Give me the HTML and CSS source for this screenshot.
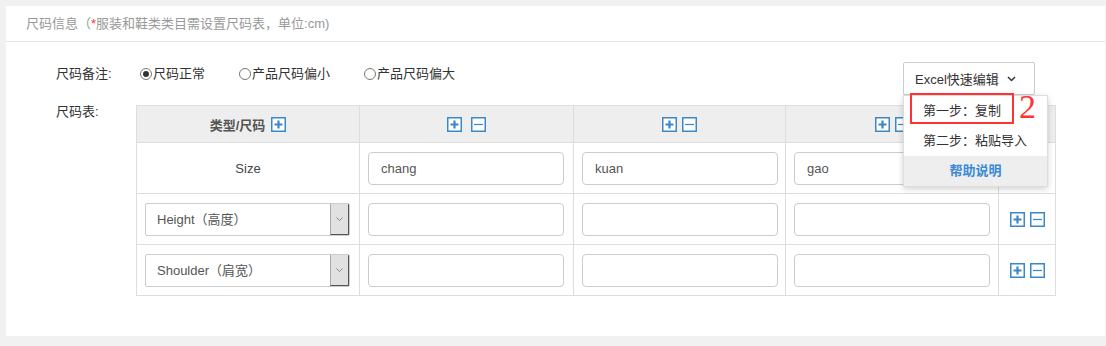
FILE: index.html
```html
<!DOCTYPE html>
<html lang="zh-CN">
<head>
  <meta charset="UTF-8">
  <title>尺码信息</title>
  <link rel="stylesheet" href="styles.css">
</head>
<body>

<div class="panel">
  <div class="panel-head">尺码信息（<span class="req">*</span>服装和鞋类类目需设置尺码表，单位:cm)</div>

  <div class="panel-body">
    <div class="note-row">
      <div class="label">尺码备注:</div>
      <div class="radios">
        <label class="radio"><span class="dot checked"></span>尺码正常</label>
        <label class="radio"><span class="dot"></span>产品尺码偏小</label>
        <label class="radio"><span class="dot"></span>产品尺码偏大</label>
      </div>

      <div class="dropdown">
        <div class="dd-btn">Excel快速编辑
          <svg class="caret" width="9" height="6" viewBox="0 0 9 6"><path d="M1 1l3.5 3.5L8 1" fill="none" stroke="#333" stroke-width="1.5"/></svg>
        </div>
        <div class="dd-menu">
          <div class="dd-item">第一步：复制</div>
          <div class="dd-item">第二步：粘贴导入</div>
          <div class="dd-item help">帮助说明</div>
          <div class="mark"></div>
          <div class="mark-num">2</div>
        </div>
      </div>
    </div>

    <div class="table-row">
      <div class="label short">尺码表:</div>
      <table class="size-table">
        <colgroup>
          <col style="width:223px"><col style="width:214px"><col style="width:212px"><col style="width:213px"><col style="width:57px">
        </colgroup>
        <tr class="head">
          <th><span class="th-text">类型/尺码</span><span class="icons"><svg class="ico" viewBox="0 0 15 15"><rect x="0.75" y="0.75" width="13.5" height="13.5"/><path class="plus" d="M3.5 7.5h8M7.5 3.5v8"/></svg></span></th>
          <th><span class="icons wide"><svg class="ico" viewBox="0 0 15 15"><rect x="0.75" y="0.75" width="13.5" height="13.5"/><path class="plus" d="M3.5 7.5h8M7.5 3.5v8"/></svg><svg class="ico" viewBox="0 0 15 15"><rect x="0.75" y="0.75" width="13.5" height="13.5"/><path class="minus" d="M3 7.5h9"/></svg></span></th>
          <th><span class="icons"><svg class="ico" viewBox="0 0 15 15"><rect x="0.75" y="0.75" width="13.5" height="13.5"/><path class="plus" d="M3.5 7.5h8M7.5 3.5v8"/></svg><svg class="ico" viewBox="0 0 15 15"><rect x="0.75" y="0.75" width="13.5" height="13.5"/><path class="minus" d="M3 7.5h9"/></svg></span></th>
          <th><span class="icons"><svg class="ico" viewBox="0 0 15 15"><rect x="0.75" y="0.75" width="13.5" height="13.5"/><path class="plus" d="M3.5 7.5h8M7.5 3.5v8"/></svg><svg class="ico" viewBox="0 0 15 15"><rect x="0.75" y="0.75" width="13.5" height="13.5"/><path class="minus" d="M3 7.5h9"/></svg></span></th>
          <th></th>
        </tr>
        <tr>
          <td class="name">Size</td>
          <td><input class="field" value="chang"></td>
          <td><input class="field" value="kuan"></td>
          <td><input class="field" value="gao"></td>
          <td></td>
        </tr>
        <tr>
          <td><div class="select"><span class="sel-text">Height（高度）</span><span class="sel-btn"><svg width="7" height="4" viewBox="0 0 7 4"><path d="M0.5 0.5l3 3 3-3" fill="none" stroke="#888" stroke-width="1"/></svg></span></div></td>
          <td><input class="field"></td>
          <td><input class="field"></td>
          <td><input class="field"></td>
          <td><span class="icons"><svg class="ico" viewBox="0 0 15 15"><rect x="0.75" y="0.75" width="13.5" height="13.5"/><path class="plus" d="M3.5 7.5h8M7.5 3.5v8"/></svg><svg class="ico" viewBox="0 0 15 15"><rect x="0.75" y="0.75" width="13.5" height="13.5"/><path class="minus" d="M3 7.5h9"/></svg></span></td>
        </tr>
        <tr>
          <td><div class="select"><span class="sel-text">Shoulder（肩宽）</span><span class="sel-btn"><svg width="7" height="4" viewBox="0 0 7 4"><path d="M0.5 0.5l3 3 3-3" fill="none" stroke="#888" stroke-width="1"/></svg></span></div></td>
          <td><input class="field"></td>
          <td><input class="field"></td>
          <td><input class="field"></td>
          <td><span class="icons"><svg class="ico" viewBox="0 0 15 15"><rect x="0.75" y="0.75" width="13.5" height="13.5"/><path class="plus" d="M3.5 7.5h8M7.5 3.5v8"/></svg><svg class="ico" viewBox="0 0 15 15"><rect x="0.75" y="0.75" width="13.5" height="13.5"/><path class="minus" d="M3 7.5h9"/></svg></span></td>
        </tr>
      </table>
    </div>
  </div>
</div>

</body>
</html>
```

FILE: styles.css
```css
body {
  margin: 0;
  background: #f1f1f1;
  font-family: "Liberation Sans", "Noto Sans CJK SC", sans-serif;
  font-size: 13px;
  color: #333;
}
.panel {
  margin: 6px 1px 0 6px;
  height: 330px;
  background: #fff;
}
.panel-head {
  height: 35px;
  line-height: 35px;
  padding-left: 20px;
  border-bottom: 1px solid #e5e5e5;
  color: #999;
}
.req {
  color: #f33;
}
.panel-body {
  padding: 20px 0 0 50px;
}
.note-row {
  display: flex;
  align-items: flex-start;
}
.label {
  width: 84px;
  line-height: 24px;
  flex: none;
}
.label.short {
  width: 80px;
  line-height: 14px;
}
.radios {
  display: flex;
  line-height: 24px;
}
.radio {
  display: flex;
  align-items: center;
  margin-right: 34px;
}
.dot {
  width: 10px;
  height: 10px;
  border: 1px solid #777;
  border-radius: 50%;
  margin-right: 1px;
  position: relative;
}
.dot.checked::after {
  content: "";
  position: absolute;
  left: 2px;
  top: 2px;
  width: 6px;
  height: 6px;
  border-radius: 50%;
  background: #333;
}
.dropdown {
  margin-left: auto;
  margin-right: 70px;
  position: relative;
}
.dd-btn {
  width: 132px;
  height: 33px;
  box-sizing: border-box;
  border: 1px solid #ccc;
  border-radius: 2px;
  display: flex;
  align-items: center;
  padding-left: 11px;
  color: #333;
}
.caret {
  margin-left: 8px;
}
.dd-menu {
  position: absolute;
  top: 33px;
  left: 0;
  width: 145px;
  background: #fff;
  border: 1px solid #ddd;
  box-sizing: border-box;
  box-shadow: 0 2px 6px rgba(0, 0, 0, 0.18);
  z-index: 5;
}
.dd-item {
  height: 30px;
  line-height: 30px;
  padding-left: 19px;
  color: #333;
}
.dd-item.help {
  padding-left: 0;
  text-align: center;
  background: #eee;
  color: #3a8ad6;
  font-weight: bold;
}
.mark {
  position: absolute;
  left: 6px;
  top: -3px;
  width: 104px;
  height: 31px;
  box-sizing: border-box;
  border: 2px solid #f33;
}
.mark-num {
  position: absolute;
  left: 115px;
  top: -6px;
  font-family: "Liberation Serif", serif;
  font-size: 34px;
  line-height: 34px;
  color: #f33;
}
.table-row {
  display: flex;
  margin-top: 10px;
}
.size-table {
  flex: none;
  width: 920px;
  table-layout: fixed;
  border-collapse: collapse;
}
.size-table th,
.size-table td {
  border: 1px solid #ddd;
  padding: 0;
  text-align: center;
  vertical-align: middle;
}
.size-table th {
  height: 36px;
  background: #eee;
  color: #555;
  font-weight: bold;
}
.size-table td {
  height: 50px;
}
.th-text {
  vertical-align: middle;
}
.icons {
  display: inline-flex;
  gap: 5px;
  vertical-align: middle;
}
.th-text + .icons {
  margin-left: 6px;
}
.icons.wide {
  gap: 9px;
}
.ico {
  width: 15px;
  height: 15px;
  display: block;
}
.ico rect {
  fill: #fff;
  stroke: #3b88c8;
  stroke-width: 1.5;
}
.ico .plus {
  stroke: #3b88c8;
  stroke-width: 2.2;
}
.ico .minus {
  stroke: #3b88c8;
  stroke-width: 1.2;
}
.name {
  color: #444;
}
.field {
  display: block;
  width: 196px;
  height: 33px;
  box-sizing: border-box;
  margin-left: 8px;
  border: 1px solid #ccc;
  border-radius: 4px;
  padding: 0 12px;
  font-family: "Liberation Sans", "Noto Sans CJK SC", sans-serif;
  font-size: 13px;
  color: #555;
  outline: none;
}
.select {
  display: flex;
  width: 205px;
  height: 33px;
  box-sizing: border-box;
  margin-left: 8px;
  border: 1px solid #ccc;
  border-radius: 2px;
  text-align: left;
  overflow: hidden;
}
.sel-text {
  flex: 1;
  line-height: 31px;
  padding-left: 11px;
  color: #555;
}
.sel-btn {
  width: 17px;
  background: #e1e1e1;
  border-left: 1px solid #aaa;
  border-right: 1px solid #555;
  border-bottom: 1px solid #555;
  display: flex;
  align-items: center;
  justify-content: center;
}
```
